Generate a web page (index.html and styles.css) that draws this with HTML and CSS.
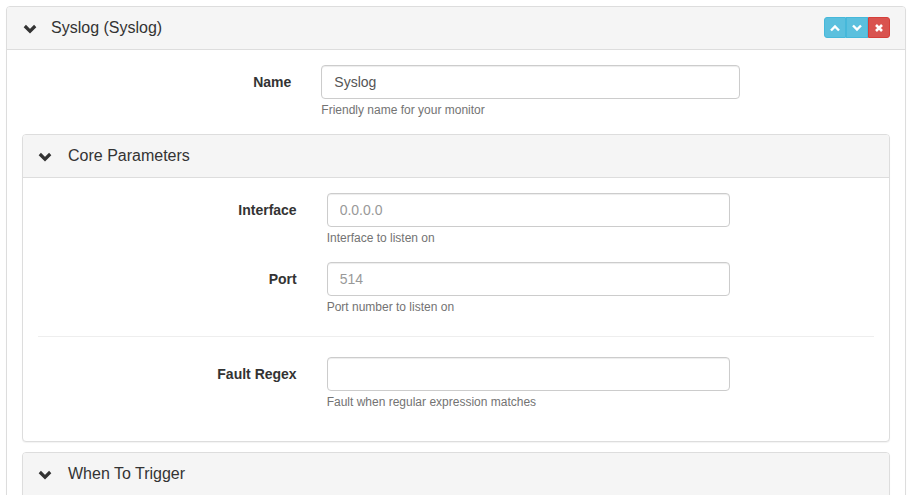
FILE: index.html
```html
<!DOCTYPE html>
<html>
<head>
<meta charset="utf-8">
<link rel="stylesheet" href="styles.css">
</head>
<body>
<div class="page">
  <div class="panel outer">
    <div class="panel-heading">
      <svg class="chev" width="14" height="10" viewBox="0 0 14 10"><polyline points="1.8,2 7,7.2 12.2,2" fill="none" stroke="#333" stroke-width="3.2"/></svg>
      <span class="title">Syslog (Syslog)</span>
      <div class="btn-group">
        <button class="btn info"><svg width="12" height="8" viewBox="0 0 12 8"><polyline points="2,6.5 6,2.5 10,6.5" fill="none" stroke="#fff" stroke-width="2.4"/></svg></button>
        <button class="btn info"><svg width="12" height="8" viewBox="0 0 12 8"><polyline points="2,1.5 6,5.5 10,1.5" fill="none" stroke="#fff" stroke-width="2.4"/></svg></button>
        <button class="btn danger"><svg width="10" height="10" viewBox="0 0 10 10"><path d="M2 2 L8 8 M8 2 L2 8" stroke="#fff" stroke-width="2.6"/></svg></button>
      </div>
    </div>
    <div class="panel-body">
      <div class="form-group">
        <label class="control-label">Name</label>
        <div class="field">
          <input class="form-control" type="text" value="Syslog">
          <span class="help">Friendly name for your monitor</span>
        </div>
      </div>

      <div class="panel inner">
        <div class="panel-heading">
          <svg class="chev" width="14" height="10" viewBox="0 0 14 10"><polyline points="1.8,2 7,7.2 12.2,2" fill="none" stroke="#333" stroke-width="3.2"/></svg>
          <span class="title">Core Parameters</span>
        </div>
        <div class="panel-body">
          <div class="form-group">
            <label class="control-label">Interface</label>
            <div class="field">
              <input class="form-control" type="text" placeholder="0.0.0.0">
              <span class="help">Interface to listen on</span>
            </div>
          </div>
          <div class="form-group">
            <label class="control-label">Port</label>
            <div class="field">
              <input class="form-control" type="text" placeholder="514">
              <span class="help">Port number to listen on</span>
            </div>
          </div>
          <hr class="sep">
          <div class="form-group">
            <label class="control-label">Fault Regex</label>
            <div class="field">
              <input class="form-control" type="text">
              <span class="help">Fault when regular expression matches</span>
            </div>
          </div>
        </div>
      </div>

      <div class="panel inner">
        <div class="panel-heading">
          <svg class="chev" width="14" height="10" viewBox="0 0 14 10"><polyline points="1.8,2 7,7.2 12.2,2" fill="none" stroke="#333" stroke-width="3.2"/></svg>
          <span class="title">When To Trigger</span>
        </div>
        <div class="panel-body tall"></div>
      </div>
    </div>
  </div>
</div>
</body>
</html>
```
FILE: styles.css
```css
* { box-sizing: border-box; }
html, body { margin: 0; padding: 0; background: #fff; }
body {
  font-family: "Liberation Sans", Arial, sans-serif;
  font-size: 14px;
  line-height: 1.42857;
  color: #333;
  overflow: hidden;
}
.page { padding: 6px 5px 0 6px; }
.panel {
  border: 1px solid #ddd;
  border-radius: 4px;
  background: #fff;
  box-shadow: 0 1px 1px rgba(0,0,0,0.05);
}
.panel-heading {
  display: flex;
  align-items: center;
  height: 43px;
  padding: 0 15px;
  background: #f5f5f5;
  border-bottom: 1px solid #ddd;
  border-radius: 3px 3px 0 0;
}
.chev { flex: none; margin: 1px 0 0 1px; }
.title {
  font-size: 16px;
  color: #333;
  margin-left: 14px;
}
.btn-group { margin-left: auto; display: flex; margin-top: -1px; }
.btn {
  width: 22px;
  height: 21px;
  padding: 0;
  border: 1px solid;
  display: flex;
  align-items: center;
  justify-content: center;
  cursor: pointer;
}
.btn.info { background: #5bc0de; border-color: #46b8da; }
.btn.danger { background: #d9534f; border-color: #d43f3a; }
.btn:first-child { border-radius: 3px 0 0 3px; }
.btn:last-child { border-radius: 0 3px 3px 0; }
.panel-body { padding: 15px; }
.form-group {
  display: flex;
  margin: 0 -15px 15px;
}
.control-label {
  flex: 0 0 33.3333%;
  padding: 7px 15px 0;
  text-align: right;
  font-weight: bold;
  line-height: 20px;
}
.field {
  flex: 0 0 50%;
  padding: 0 15px;
  display: flex;
  flex-direction: column;
}
.form-control {
  height: 34px;
  padding: 6px 12px;
  font-family: inherit;
  font-size: 14px;
  color: #555;
  border: 1px solid #ccc;
  border-radius: 4px;
  box-shadow: inset 0 1px 1px rgba(0,0,0,0.075);
  background: #fff;
}
.form-control::placeholder { color: #999; }
.help {
  margin-top: 3px;
  font-size: 12px;
  line-height: 17px;
  color: #737373;
}
.sep {
  border: 0;
  border-top: 1px solid #eee;
  margin: 20px 0 20px;
}
.inner { margin-top: 0; margin-bottom: 10px; }
.inner .chev { margin-left: 0; }
.inner .title { margin-left: 16px; }
.tall { height: 100px; }
```
